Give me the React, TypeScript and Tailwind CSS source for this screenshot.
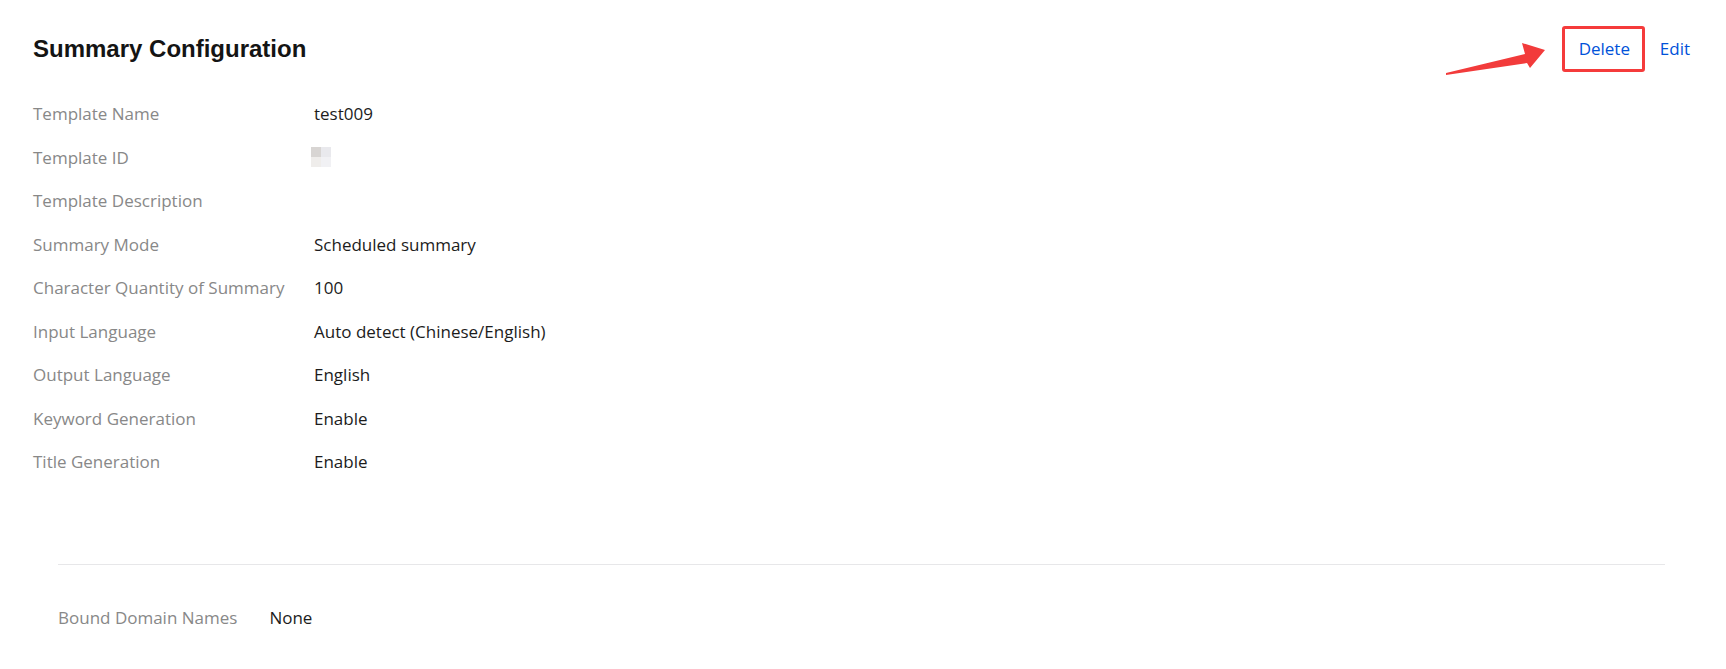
const ROWS: { label: string; value?: string; masked?: boolean }[] = [
  { label: 'Template Name', value: 'test009' },
  { label: 'Template ID', masked: true },
  { label: 'Template Description', value: '' },
  { label: 'Summary Mode', value: 'Scheduled summary' },
  { label: 'Character Quantity of Summary', value: '100' },
  { label: 'Input Language', value: 'Auto detect (Chinese/English)' },
  { label: 'Output Language', value: 'English' },
  { label: 'Keyword Generation', value: 'Enable' },
  { label: 'Title Generation', value: 'Enable' },
]

function MaskedId() {
  // pixelated placeholder, 2x2 blocks
  return (
    <div className="grid grid-cols-2 w-[20px] h-[20px] -ml-[3px]">
      <span className="bg-[#d8d5d3]" />
      <span className="bg-[#e9e9ed]" />
      <span className="bg-[#efedeb]" />
      <span className="bg-[#f1f1f4]" />
    </div>
  )
}

function Arrow() {
  return (
    <svg
      width="100"
      height="34"
      viewBox="0 0 100 34"
      className="absolute right-full mr-[16px] top-[17px] pointer-events-none"
    >
      <polygon
        points="0,32 81,20 84,25 99,7 76,0 79,11 0,30"
        fill="#f23b3b"
      />
    </svg>
  )
}

export default function App() {
  return (
    <div className="min-h-[669px] w-full bg-white text-[17px] font-['Open_Sans','Noto_Sans',sans-serif]">
      {/* Header + details */}
      <div className="pl-[33px] pr-[36px] pt-[26px]">
        <div className="flex items-center justify-between h-[46px]">
          <h1 className="text-[24px] font-bold text-[#141414] font-['Liberation_Sans',Arial,sans-serif]">
            Summary Configuration
          </h1>
          <div className="relative flex items-center">
            <Arrow />
            <button className="w-[83px] h-[46px] border-[3px] border-[#f53b3b] rounded-[3px] text-[#0052d9] pl-[2px]">
              Delete
            </button>
            <button className="ml-[15px] text-[#0052d9]">Edit</button>
          </div>
        </div>

        <div className="mt-[20px]">
          {ROWS.map(r => (
            <div key={r.label} className="flex items-center h-[43.5px]">
              <div className="w-[281px] shrink-0 text-[#888888]">{r.label}</div>
              <div className="text-[#1c1c1c]">{r.masked ? <MaskedId /> : r.value}</div>
            </div>
          ))}
        </div>
      </div>

      {/* Bound domains */}
      <div className="mx-[58px] mr-[61px] mt-[80px] border-t border-[#e7e7e9] pt-[31px]">
        <div className="flex items-center h-[43.5px]">
          <span className="text-[#888888] mr-[32px]">Bound Domain Names</span>
          <span className="text-[#1c1c1c]">None</span>
        </div>
      </div>
    </div>
  )
}
